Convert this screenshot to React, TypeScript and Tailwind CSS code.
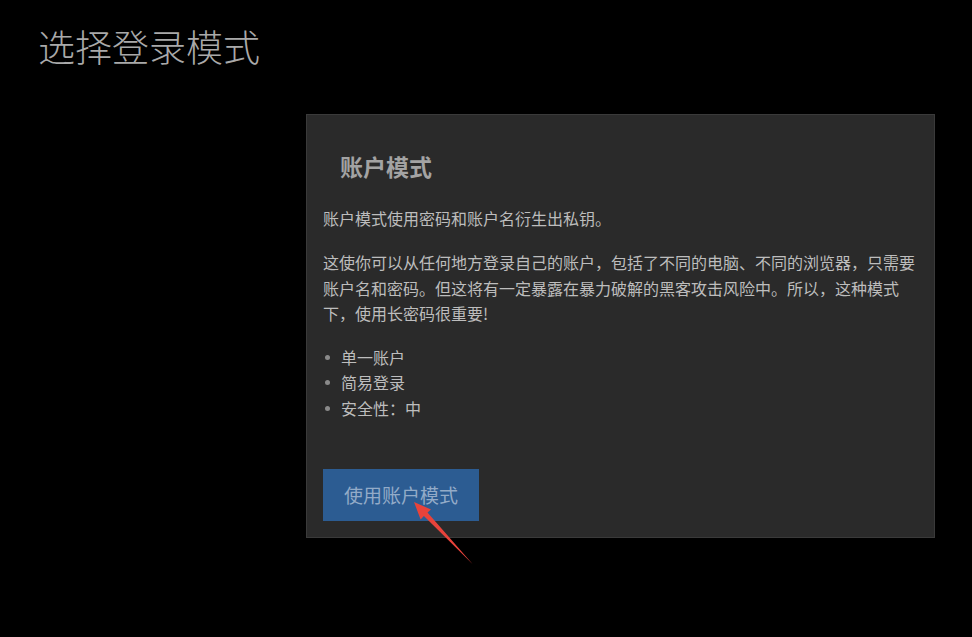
import React from "react";

const font = { fontFamily: '"Noto Sans CJK SC", "Noto Sans", sans-serif' };

export default function App() {
  return (
    <div className="relative min-h-[637px] w-full bg-black" style={font}>
      <div className="pl-[38px] pt-[25px] text-[37px] leading-[43px] font-light text-[#a9a9a9]">
        选择登录模式
      </div>
      <div className="ml-[306px] mt-[46px] w-[629px] border border-[#3a3a3a] bg-[#2a2a2a] px-[16px] pt-[36px] pb-[16px]">
        <h2 className="pl-[17px] text-[23px] font-bold leading-[30px] text-[#a3a3a3]">账户模式</h2>
        <div className="text-[16px] text-[#bdbdbd]">
          <p className="mt-[24px] leading-[26px]">账户模式使用密码和账户名衍生出私钥。</p>
          <p className="mt-[19px] leading-[25.5px]">
            这使你可以从任何地方登录自己的账户，包括了不同的电脑、不同的浏览器，只需要账户名和密码。但这将有一定暴露在暴力破解的黑客攻击风险中。所以，这种模式下，使用长密码很重要!
          </p>
          <ul className="mt-[18px] leading-[25.5px]">
            {["单一账户", "简易登录", "安全性：中"].map((t) => (
              <li key={t} className="flex items-center">
                <span className="ml-[2px] mr-[11px] h-[5px] w-[5px] rounded-full bg-[#8a8a8a]" />
                {t}
              </li>
            ))}
          </ul>
        </div>
        <button className="mt-[48px] flex h-[52px] w-[156px] items-center justify-center bg-[#2c5c92] text-[19px] text-[#93abc8]">
          使用账户模式
        </button>
      </div>
      <svg className="absolute left-[400px] top-[495px]" width="80" height="75" viewBox="400 495 80 75">
        <polygon
          points="414,502 431,509.5 427.5,512.6 472.5,564 423.9,516 420.6,519.5"
          fill="#e8433b"
        />
      </svg>
    </div>
  );
}
